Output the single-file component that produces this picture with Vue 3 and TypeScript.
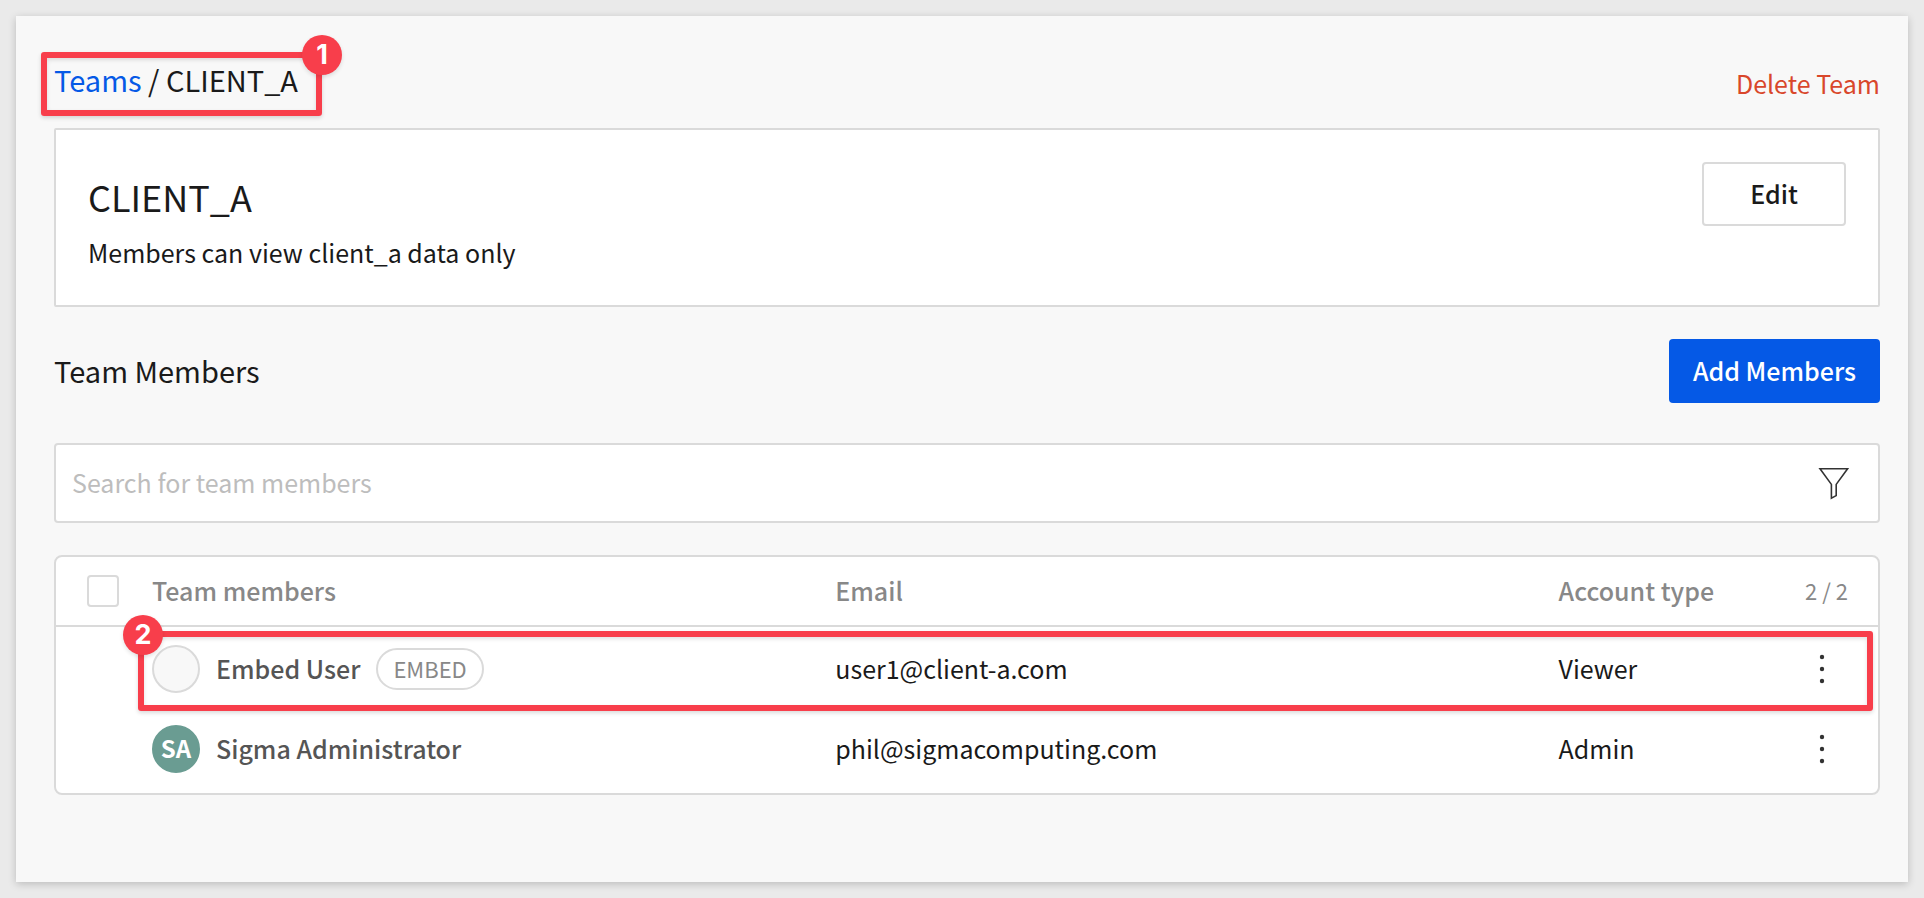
<script setup lang="ts">
import { ref } from 'vue'

interface Member {
  name: string
  email: string
  accountType: string
  initials: string
  embed: boolean
}

const members: Member[] = [
  { name: 'Embed User', email: 'user1@client-a.com', accountType: 'Viewer', initials: '', embed: true },
  { name: 'Sigma Administrator', email: 'phil@sigmacomputing.com', accountType: 'Admin', initials: 'SA', embed: false },
]

const search = ref('')
const allSelected = ref(false)
</script>

<template>
  <main class="panel">
    <header class="page-header">
      <nav class="breadcrumb" aria-label="Breadcrumb">
        <a href="#teams">Teams</a> / <span>CLIENT_A</span>
        <div class="callout callout-crumb"><span class="marker">1</span></div>
      </nav>
      <button type="button" class="delete">Delete Team</button>
    </header>

    <section class="card">
      <div class="card-text">
        <h1>CLIENT_A</h1>
        <p>Members can view client_a data only</p>
      </div>
      <button type="button" class="btn btn-outline">Edit</button>
    </section>

    <div class="section-header">
      <h2>Team Members</h2>
      <button type="button" class="btn btn-primary">Add Members</button>
    </div>

    <div class="search">
      <input v-model="search" type="text" placeholder="Search for team members" aria-label="Search for team members" />
      <button type="button" class="icon-btn filter" aria-label="Filter">
        <svg width="32" height="36" viewBox="0 0 32 36" fill="none" stroke="#333" stroke-width="1.6">
          <path d="M2 3.8h27.6L18.2 19.4v11.2l-4.8 2.6V19.4z" />
        </svg>
      </button>
    </div>

    <div class="table-wrap">
      <table>
        <colgroup>
          <col class="col-check" />
          <col class="col-name" />
          <col class="col-email" />
          <col />
          <col class="col-menu" />
        </colgroup>
        <thead>
          <tr>
            <th class="check-cell"><input v-model="allSelected" type="checkbox" aria-label="Select all members" /></th>
            <th>Team members</th>
            <th>Email</th>
            <th>Account type</th>
            <th class="count">2 / 2</th>
          </tr>
        </thead>
        <tbody>
          <tr v-for="m in members" :key="m.email">
            <td></td>
            <td>
              <div class="member">
                <span class="avatar" :class="{ filled: m.initials }">{{ m.initials }}</span>
                <span class="name">{{ m.name }}</span>
                <span v-if="m.embed" class="tag">EMBED</span>
              </div>
            </td>
            <td class="text-cell">{{ m.email }}</td>
            <td class="text-cell">{{ m.accountType }}</td>
            <td class="menu-cell">
              <button type="button" class="icon-btn" :aria-label="`Actions for ${m.name}`">
                <svg width="48" height="48" viewBox="0 0 48 48" fill="#333">
                  <circle cx="24" cy="12" r="2.2" />
                  <circle cx="24" cy="24" r="2.2" />
                  <circle cx="24" cy="36" r="2.2" />
                </svg>
              </button>
              <div v-if="m.embed" class="callout callout-row"><span class="marker">2</span></div>
            </td>
          </tr>
        </tbody>
      </table>
    </div>
  </main>
</template>

<style>
body {
  background: #eaeaea;
}
</style>

<style scoped>
* {
  box-sizing: border-box;
}
.panel {
  margin: 16px;
  padding: 43px 28px 87px 38px;
  min-height: calc(100vh - 32px);
  background: #f8f8f8;
  box-shadow: 0 2px 8px rgba(0, 0, 0, 0.2);
  color: #1a1a1a;
  font: 400 25px/40px 'Noto Sans CJK SC', 'Noto Sans', sans-serif;
}
h1,
h2,
p {
  margin: 0;
  font-weight: 400;
}
button {
  font: inherit;
  cursor: pointer;
}
.page-header {
  display: flex;
  justify-content: space-between;
  align-items: flex-end;
  margin-bottom: 29px;
}
.breadcrumb {
  position: relative;
  font-size: 29px;
}
.breadcrumb a {
  color: #0559e6;
  text-decoration: none;
}
.delete {
  padding: 0;
  border: 0;
  background: none;
  color: #d9472b;
  line-height: 32px;
}
.card {
  display: flex;
  justify-content: space-between;
  align-items: flex-start;
  padding: 32px 32px 33px;
  border: 2px solid #dadada;
  border-radius: 2px;
  background: #fff;
}
.card-text {
  padding-top: 10px;
}
h1 {
  margin-bottom: 12px;
  font-size: 36px;
  line-height: 48px;
}
.btn {
  height: 64px;
  border-radius: 4px;
  font-weight: 500;
}
.btn-outline {
  width: 144px;
  padding: 0 0 2px;
  border: 2px solid #dadada;
  background: #fff;
  color: #1a1a1a;
}
.btn-primary {
  padding: 0 24px 2px;
  border: 0;
  background: #0559e6;
  color: #fff;
}
.section-header {
  display: flex;
  justify-content: space-between;
  align-items: center;
  margin: 32px 0 40px;
}
h2 {
  padding-bottom: 2px;
  font-size: 29px;
}
.search {
  display: flex;
  align-items: center;
  height: 80px;
  padding: 0 28px 0 16px;
  border: 2px solid #dadada;
  border-radius: 4px;
  background: #fff;
}
.search input {
  flex: 1;
  min-width: 0;
  padding: 0 0 2px;
  border: 0;
  outline: 0;
  background: none;
  color: inherit;
  font: inherit;
}
.search input::placeholder {
  color: #bdbdbd;
  opacity: 1;
}
.icon-btn {
  padding: 0;
  border: 0;
  background: none;
}
.icon-btn svg {
  display: block;
}
.table-wrap {
  margin-top: 32px;
  padding-bottom: 4px;
  border: 2px solid #dadada;
  border-radius: 8px;
  background: #fff;
}
table {
  width: 100%;
  border-spacing: 0;
  table-layout: fixed;
}
.col-check {
  width: 96px;
}
.col-name {
  width: 37.5%;
}
.col-email {
  width: 39.7%;
}
.col-menu {
  width: 104px;
}
th,
td {
  padding: 0;
  text-align: left;
  white-space: nowrap;
}
th {
  height: 70px;
  padding-bottom: 2px;
  border-bottom: 2px solid #dadada;
  color: #888;
  font-weight: 500;
}
tbody::before {
  content: '';
  display: table-row;
  height: 2px;
}
tbody tr {
  position: relative;
}
td {
  height: 80px;
}
.text-cell {
  padding-bottom: 2px;
}
.check-cell {
  padding: 0 0 0 31px;
}
.check-cell input {
  display: block;
  width: 32px;
  height: 32px;
  margin: 0;
  appearance: none;
  border: 2px solid #dadada;
  border-radius: 4px;
  background: #fff;
}
.check-cell input:checked {
  background: #0559e6;
}
.count {
  padding-right: 30px;
  text-align: right;
  font-size: 22px;
  font-weight: 400;
}
.member {
  display: flex;
  align-items: center;
}
.avatar {
  width: 48px;
  height: 48px;
  margin-right: 16px;
  border: 2px solid #dadada;
  border-radius: 50%;
  background: #f8f8f8;
  color: #fff;
  font-size: 24px;
  font-weight: 700;
  line-height: 42px;
  text-align: center;
}
.avatar.filled {
  border-color: #6a9c92;
  background: #6a9c92;
}
.name {
  padding-bottom: 2px;
  color: #555;
  font-weight: 500;
}
.tag {
  height: 42px;
  margin-left: 16px;
  padding: 0 15px;
  border: 2px solid #dadada;
  border-radius: 21px;
  color: #888;
  font-size: 22px;
  line-height: 36px;
}
.menu-cell {
  padding-right: 32px;
}
.menu-cell .icon-btn {
  margin-left: auto;
  display: block;
}
/* Numbered highlight frames laid over the page */
.callout {
  position: absolute;
  border: 6px solid #f83e4b;
  border-radius: 3px;
  box-shadow: 0 2px 4px rgba(0, 0, 0, 0.15), inset 0 2px 4px rgba(0, 0, 0, 0.12);
  pointer-events: none;
}
.marker {
  position: absolute;
  width: 40px;
  height: 40px;
  border-radius: 50%;
  background: #f83e4b;
  box-shadow: 0 2px 4px rgba(0, 0, 0, 0.12);
  color: #fff;
  font: 700 27px/40px Inter, 'Liberation Sans', sans-serif;
  text-align: center;
}
.callout-crumb {
  inset: -7px -24px -17px -13px;
}
.callout-crumb .marker {
  top: -23px;
  right: -26px;
}
.callout-row {
  inset: 2px 5px -2px 82px;
}
.callout-row .marker {
  top: -22px;
  left: -21px;
}
</style>
